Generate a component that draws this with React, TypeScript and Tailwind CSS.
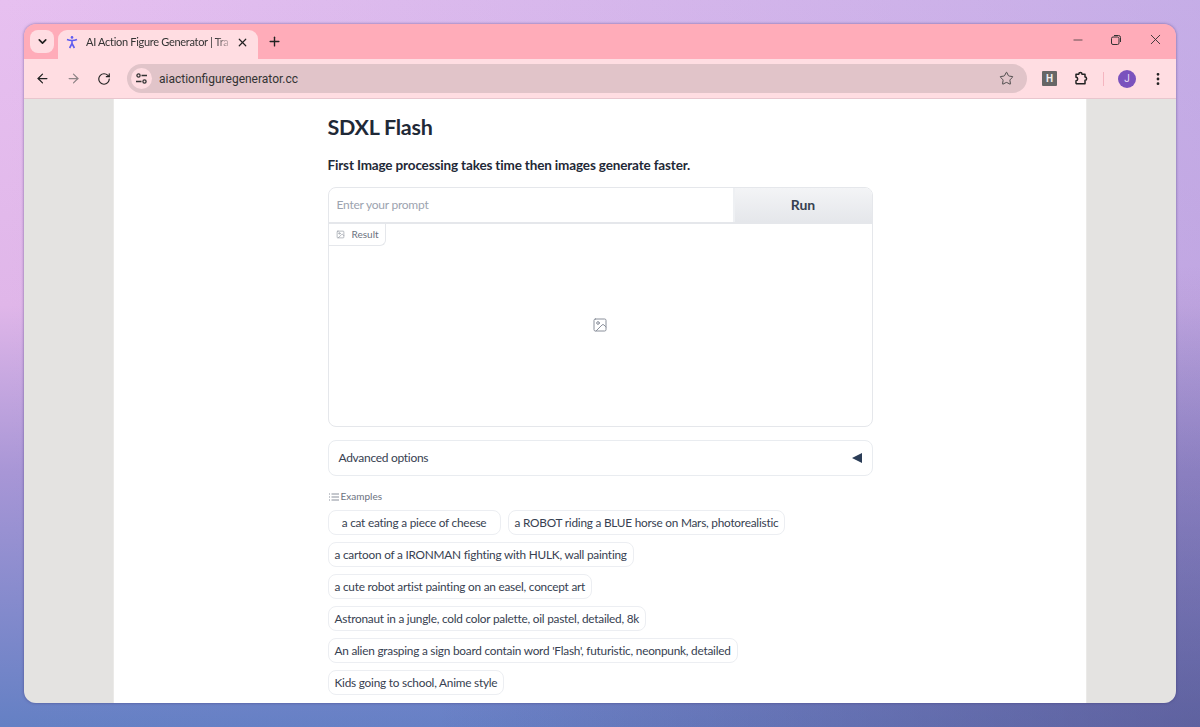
import { ArrowLeft, ArrowRight, RotateCw, Star, Plus, X, ChevronDown, Minus, EllipsisVertical, Image } from "lucide-react"

const EXAMPLES = [
    ["a cat eating a piece of cheese", "a ROBOT riding a BLUE horse on Mars, photorealistic"],
    ["a cartoon of a IRONMAN fighting with HULK, wall painting"],
    ["a cute robot artist painting on an easel, concept art"],
    ["Astronaut in a jungle, cold color palette, oil pastel, detailed, 8k"],
    ["An alien grasping a sign board contain word 'Flash', futuristic, neonpunk, detailed"],
    ["Kids going to school, Anime style"],
]

const CONTENT_FONT = "font-['Lato','Noto_Sans',sans-serif]"
const CHROME_FONT = "font-['Roboto','Noto_Sans',sans-serif]"

function TabBar() {
    return (
        <div className="flex h-[35px] shrink-0 items-start bg-[#ffacb9] pl-[6px] pt-[6px]">
            <button className="flex h-[23px] w-[24px] items-center justify-center rounded-[8px] bg-[#ffdde2] text-[#222]">
                <ChevronDown size={13} strokeWidth={3} />
            </button>
            <div className="ml-[4px] flex h-[29px] w-[200px] items-center rounded-t-[9px] bg-[#ffdde2] pb-[5px] pl-[7px] font-['Lato','Noto_Sans',sans-serif] text-[11px] text-[#333]">
                <svg width="14" height="14" viewBox="0 0 14 14" fill="none" stroke="#5f5cf0" strokeWidth="1.6">
                    <circle cx="7" cy="2.4" r="1.3" fill="#5f5cf0" stroke="none" />
                    <path d="M2 4.6c3 1.1 7 1.1 10 0M7 5.5V8.5M7 8.5L4.6 13M7 8.5L9.4 13" />
                </svg>
                <span className="ml-[7px] w-[147px] overflow-hidden whitespace-nowrap tracking-[-0.3px] [mask-image:linear-gradient(to_right,black_88%,transparent)]">AI Action Figure Generator | Tra</span>
                <X size={13} strokeWidth={2.2} className="ml-[3px] text-[#222]" />
            </div>
            <Plus size={15} strokeWidth={2.2} className="ml-[9px] mt-[4px] text-[#222]" />
            <div className="flex-1" />
            <div className="mt-[1px] flex items-center text-[#333]">
                <Minus size={14} strokeWidth={1.3} />
                <svg width="14" height="14" viewBox="0 0 14 14" fill="none" stroke="currentColor" className="ml-[24px]">
                    <rect x="2.5" y="4" width="7.5" height="7.5" rx="1.5" />
                    <path d="M5 2.5h4.5a2 2 0 0 1 2 2V9" />
                </svg>
                <X size={17} strokeWidth={1.3} className="ml-[24px] mr-[12px]" />
            </div>
        </div>
    )
}

function Toolbar() {
    return (
        <div className="flex h-[40px] shrink-0 items-center border-b border-[#e8c6ce] bg-[#ffdde2] pl-[11px] text-[#222]">
            <ArrowLeft size={15} strokeWidth={2} />
            <ArrowRight size={15} strokeWidth={2} className="ml-[16px] text-[#8f8487]" />
            <RotateCw size={14} strokeWidth={2} className="ml-[16px]" />
            <div className="ml-[16px] flex h-[29px] w-[900px] items-center rounded-full bg-[#e1c4c9] pl-[4px]">
                <div className="flex h-[21px] w-[21px] items-center justify-center rounded-full bg-[#ffdde2]">
                    <svg width="13" height="13" viewBox="0 0 13 13" fill="none" stroke="#333" strokeWidth="1.3">
                        <circle cx="3.5" cy="3.5" r="1.6" />
                        <path d="M6.5 3.5h5.5M1 9.5h5.5" />
                        <circle cx="9.5" cy="9.5" r="1.6" />
                    </svg>
                </div>
                <span className={`ml-[7px] text-[12px] text-[#333] ${CHROME_FONT}`}>aiactionfiguregenerator.cc</span>
                <div className="flex-1" />
                <Star size={15} strokeWidth={1.5} className="mr-[13px] text-[#444]" />
            </div>
            <div className={`ml-[15px] flex h-[15px] w-[15px] items-center justify-center rounded-[1px] bg-[#666] text-[10px] font-bold text-[#eee] ${CHROME_FONT}`}>H</div>
            <svg width="15" height="15" viewBox="0 0 15 15" fill="none" stroke="#222" strokeWidth="1.5" strokeLinejoin="round" className="ml-[16px]">
                <path d="M3 3.2h2.8a1.6 1.6 0 0 1 3.2 0h3v2.9a1.6 1.6 0 0 1 0 3.2v3.4H3.4l-.4-.4v-2.6a1.7 1.7 0 0 0 0-3.4z" />
            </svg>
            <div className="ml-[15px] h-[14px] w-px bg-[#f5b5c0]" />
            <div className={`ml-[14px] flex h-[18px] w-[18px] items-center justify-center rounded-full bg-[#7a52bd] text-[10px] text-[#e6dcf5] ${CHROME_FONT}`}>J</div>
            <EllipsisVertical size={16} strokeWidth={2.2} className="ml-[14px]" />
        </div>
    )
}

function ExampleChip({ text, first }: { text: string; first: boolean }) {
    return (
        <button className={`h-[25px] whitespace-nowrap rounded-[8px] border border-[#eceef2] bg-white text-[11.8px] leading-none tracking-[-0.22px] text-[#374151] ${first ? "w-[173px]" : "px-[6px]"}`}>
            {text}
        </button>
    )
}

function Content() {
    return (
        <div className="flex min-h-0 flex-1 justify-center overflow-hidden bg-[#e4e3e1]">
            <div className="w-[974px] border-x border-[#ebeae8] bg-white">
                <div className={`mx-auto w-[545px] ${CONTENT_FONT}`}>
                    <h1 className="mt-[14px] text-[21.5px] font-bold leading-[28px] tracking-[-0.25px] text-[#1f2937]">SDXL Flash</h1>
                    <p className="mt-[15px] text-[13.5px] font-bold leading-[18px] tracking-[-0.15px] text-[#1f2937]">First Image processing takes time then images generate faster.</p>

                    <div className="mt-[13px] h-[240px] overflow-hidden rounded-[8px] border border-[#e5e7eb]">
                        <div className="flex h-[36px] border-b-2 border-[#e5e7eb]">
                            <div className="flex-1 pl-[8px] text-[12px] leading-[34px] tracking-[-0.24px] text-[#9ca3af]">Enter your prompt</div>
                            <button className="w-[139px] border-l-2 border-[#eef0f3] bg-gradient-to-b from-[#f3f4f6] to-[#e5e7eb] pb-[2px] text-[14px] font-bold text-[#374151]">Run</button>
                        </div>
                        <div className="flex h-[22px] w-[57px] items-center rounded-br-[6px] border-b border-r border-[#e5e7eb] pl-[7px] text-[10px] text-[#6b7280]">
                            <Image size={9} strokeWidth={1.6} className="text-[#8a909b]" />
                            <span className="ml-[7px]">Result</span>
                        </div>
                        <div className="flex h-[158px] items-center justify-center">
                            <Image size={16} strokeWidth={1.5} className="text-[#8a909b]" />
                        </div>
                    </div>

                    <div className="mt-[13px] flex h-[36px] items-center justify-between rounded-[8px] border border-[#e9ecf0] px-[10px] text-[12px] tracking-[-0.3px] text-[#374151]">
                        <span>Advanced options</span>
                        <span className="h-0 w-0 border-y-[5px] border-r-[10px] border-y-transparent border-r-[#2b3d57]" />
                    </div>

                    <div className="mt-[13px] flex h-[15px] items-center pl-[1px] text-[10px] text-[#6b7280]">
                        <svg width="10" height="8" viewBox="0 0 10 8" fill="none" stroke="#7d8490" strokeWidth="0.9">
                            <path d="M2.5 1H10M2.5 4H10M2.5 7H10M0 1h1M0 4h1M0 7h1" />
                        </svg>
                        <span className="ml-[2px]">Examples</span>
                    </div>

                    <div className="mt-[6px] flex flex-col gap-[7px]">
                        {EXAMPLES.map((row, i) => (
                            <div key={i} className="flex gap-[7px]">
                                {row.map((t, j) => (
                                    <ExampleChip key={t} text={t} first={i === 0 && j === 0} />
                                ))}
                            </div>
                        ))}
                    </div>
                </div>
            </div>
        </div>
    )
}

export default function App() {
    return (
        <div className="h-[727px] w-[1200px] overflow-hidden bg-[radial-gradient(ellipse_at_100%_100%,rgba(80,60,110,0.45),transparent_45%),linear-gradient(to_right,transparent,rgba(120,130,210,0.3)),linear-gradient(to_bottom,#e7c0f0_0%,#e0b6e9_42%,#a896d6_65%,#6480c4_100%)] p-[24px]">
            <div className="flex h-[679px] flex-col overflow-hidden rounded-[12px] shadow-[0_0_3px_rgba(60,50,110,0.6)]">
                <TabBar />
                <Toolbar />
                <Content />
            </div>
        </div>
    )
}
